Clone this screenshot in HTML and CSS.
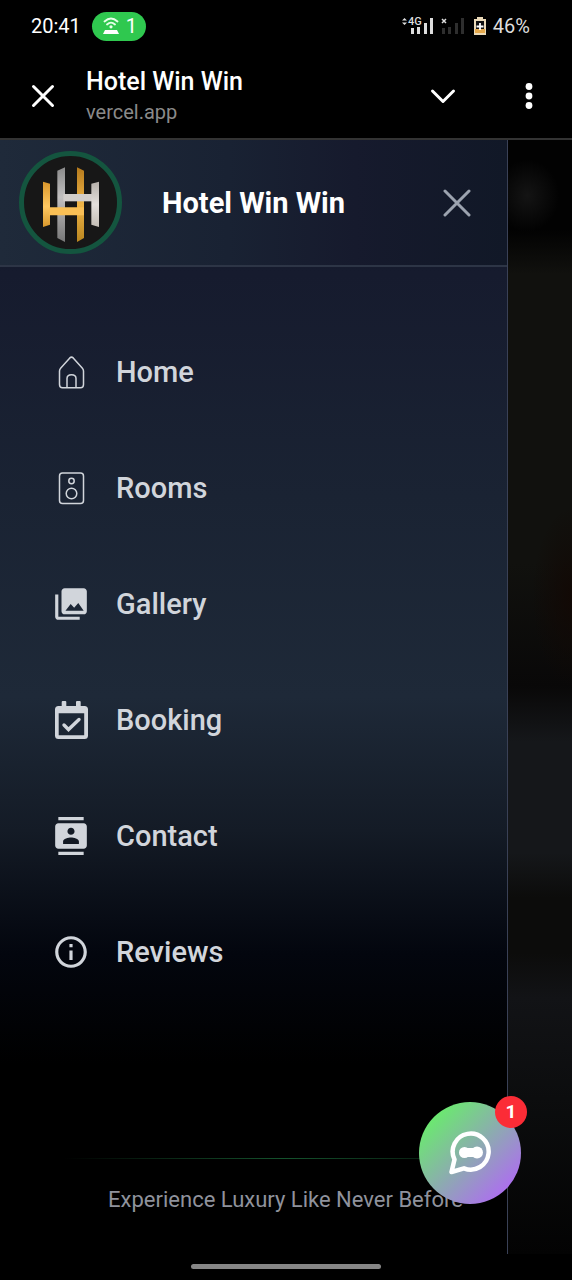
FILE: index.html
```html
<!DOCTYPE html>
<html lang="en">
<head>
  <meta charset="UTF-8">
  <meta name="viewport" content="width=device-width, initial-scale=1.0">
  <title>Hotel Win Win</title>
  <link rel="stylesheet" href="styles.css">
</head>
<body>
  <!-- Status bar -->
  <div class="status-bar">
    <span class="time">20:41</span>
    <span class="hotspot">
      <svg width="18" height="18" viewBox="0 0 18 18" fill="none" stroke="#e6ffe9" stroke-width="1.8" stroke-linecap="round">
        <path d="M2.500 4.500Q9-1.500 15.500 4.500M5 7.500Q9 3.700 13 7.500"/>
        <circle cx="9" cy="9.800" r="1.600" fill="#e6ffe9" stroke="none"/>
        <path d="M3 13h12l2 4H1z" fill="#fff" stroke="none"/>
      </svg>
      <span>1</span>
    </span>
    <div class="status-right">
      <svg class="signal" width="64" height="20" viewBox="0 0 64 20">
        <path d="M1 4.500 3.500 2 6 4.500zM1 6.500 3.500 9 6 6.500z" fill="#ddd"/>
        <text x="7" y="9" class="network">4G</text>
        <path d="M10 12h3v6h-3zM16 11h3v7h-3zM23 7h3v11h-3zM29 2h3v16h-3z" fill="#ddd"/>
        <path d="M41 12h3v6h-3zM47 11h3v7h-3zM54 7h3v11h-3zM60 2h3v16h-3z" fill="#2e2e2e"/>
        <path d="M41 3l4 4M45 3l-4 4" stroke="#ddd" stroke-width="1.500"/>
      </svg>
      <svg width="14" height="18" viewBox="0 0 14 18">
        <path d="M4 0h6v2h3v16H1V2h3z" fill="#ead9b8"/>
        <path d="M3 4h8v8H3z" fill="#111"/>
        <path d="M2 12h10v4H2z" fill="#e5a94c"/>
        <path d="M7 6v7M3.500 9.500h7" stroke="#fff" stroke-width="1.800"/>
      </svg>
      <span>46%</span>
    </div>
  </div>

  <!-- In-app browser bar -->
  <header class="app-bar">
    <button class="icon-button" aria-label="Close">
      <svg width="24" height="24" viewBox="0 0 24 24"><path d="M2.500 2.500 21.500 21.500M21.500 2.500 2.500 21.500" stroke="#fff" stroke-width="3" stroke-linecap="round"/></svg>
    </button>
    <div class="app-title">
      <div class="title">Hotel Win Win</div>
      <div class="domain">vercel.app</div>
    </div>
    <button class="icon-button minimize" aria-label="Minimize">
      <svg width="26" height="16" viewBox="0 0 26 16"><path d="M2.500 3 13 13.500 23.500 3" fill="none" stroke="#fff" stroke-width="3" stroke-linecap="round" stroke-linejoin="round"/></svg>
    </button>
    <button class="icon-button" aria-label="More options">
      <svg width="8" height="26" viewBox="0 0 8 26" fill="#fff"><circle cx="4" cy="3.500" r="3.400"/><circle cx="4" cy="13" r="3.400"/><circle cx="4" cy="22.500" r="3.400"/></svg>
    </button>
  </header>

  <div class="page">
    <!-- Drawer -->
    <aside class="drawer">
      <div class="drawer-header">
        <svg class="logo" viewBox="57 44 309 309">
          <defs>
            <linearGradient id="gold" x1="0" x2="0" y1="0" y2="1">
              <stop offset="0" stop-color="#d9962b"/>
              <stop offset=".55" stop-color="#ffc861"/>
              <stop offset="1" stop-color="#d8982c"/>
            </linearGradient>
            <linearGradient id="gold-dark" x1="0" x2="0" y1="0" y2="1">
              <stop offset="0" stop-color="#b57a1c"/>
              <stop offset=".5" stop-color="#f0b548"/>
              <stop offset="1" stop-color="#b9861f"/>
            </linearGradient>
            <linearGradient id="silver" x1="0" x2="0" y1="0" y2="1">
              <stop offset="0" stop-color="#8a8a8a"/>
              <stop offset=".4" stop-color="#c2c0c0"/>
              <stop offset="1" stop-color="#777"/>
            </linearGradient>
            <linearGradient id="silver-light" x1="0" x2="0" y1="0" y2="1">
              <stop offset="0" stop-color="#b5b0aa"/>
              <stop offset=".5" stop-color="#e4e0dc"/>
              <stop offset="1" stop-color="#c4beb5"/>
            </linearGradient>
          </defs>
          <circle cx="211.500" cy="198.500" r="147" fill="#171717" stroke="#14553f" stroke-width="15"/>
          <path d="M231 93 252 103V305L231 317z" fill="url(#gold-dark)"/>
          <path d="M172 103 195 93V317L172 305z" fill="url(#silver)"/>
          <path d="M190 173H276V195H190z" fill="#d2cecb"/>
          <path d="M274 142 297 136V272L274 265z" fill="url(#silver-light)"/>
          <path d="M129 136 150 142V265L129 272z" fill="url(#gold)"/>
          <path d="M148 213H252V237H148z" fill="#f9bf55"/>
        </svg>
        <h1 class="hotel-name">Hotel Win Win</h1>
        <button class="icon-button drawer-close" aria-label="Close menu">
          <svg width="28" height="28" viewBox="0 0 28 28"><path d="M2 2 26 26M26 2 2 26" stroke="#9ca3af" stroke-width="3" stroke-linecap="round"/></svg>
        </button>
      </div>

      <nav class="menu">
        <a class="menu-item" href="#home">
          <svg class="menu-icon" viewBox="0 0 38 38" fill="none" stroke="currentColor" stroke-width="1.500">
            <path d="M17.800 4.900Q19.500 3.300 21.200 4.900L30.200 15Q31.500 16.400 31.500 18V31.500Q31.500 34.800 28.500 34.800H10.500Q7.500 34.800 7.500 31.500V18Q7.500 16.400 8.800 15z"/>
            <path d="M15 34.800V25.500Q15 21.700 19.500 21.700T24 25.500V34.800"/>
          </svg>
          <span>Home</span>
        </a>
        <a class="menu-item" href="#rooms">
          <svg class="menu-icon" viewBox="0 0 38 38" fill="none" stroke="currentColor" stroke-width="1.500">
            <rect x="7.500" y="4" width="24" height="30.500" rx="3"/>
            <circle cx="19.500" cy="12" r="2.700"/>
            <circle cx="19.500" cy="24.500" r="5.300"/>
          </svg>
          <span>Rooms</span>
        </a>
        <a class="menu-item" href="#gallery">
          <svg class="menu-icon" viewBox="0 0 24 24" fill="currentColor">
            <path fill-rule="evenodd" d="M22 16.500V4c0-1.100-.9-2-2-2H8c-1.100 0-2 .9-2 2v12.500c0 1.100.9 2 2 2h12c1.100 0 2-.9 2-2zM8.500 16.300 11.800 12 14 14.400 16.600 11.300 20 16.300zM2 6v14c0 1.100.9 2 2 2h13.500v-2H4V6z"/>
          </svg>
          <span>Gallery</span>
        </a>
        <a class="menu-item" href="#booking">
          <svg class="menu-icon" viewBox="0 0 38 38" fill="currentColor">
            <path fill-rule="evenodd" d="M9.700 1Q9.700 0 10.700 0H13.300Q14.300 0 14.300 1V5H24V1Q24 0 25 0H27.700Q28.700 0 28.700 1V5H32.500Q36 5 36 8.500V34.500Q36 38 32.500 38H6.500Q3 38 3 34.500V8.500Q3 5 6.500 5H9.700zM6.700 12.300V34.300H32.200V12.300z"/>
            <path d="M12 24 16.500 28.500 27 18.500" fill="none" stroke="currentColor" stroke-width="3.400" stroke-linecap="round"/>
          </svg>
          <span>Booking</span>
        </a>
        <a class="menu-item" href="#contact">
          <svg class="menu-icon" viewBox="0 0 24 24" fill="currentColor">
            <path d="M20 0H4v2h16V0zM4 24h16v-2H4v2zM20 4H4c-1.100 0-2 .9-2 2v12c0 1.100.9 2 2 2h16c1.100 0 2-.9 2-2V6c0-1.100-.9-2-2-2zm-8 2.750c1.240 0 2.250 1.010 2.250 2.250s-1.010 2.250-2.250 2.250S9.750 10.240 9.750 9 10.760 6.750 12 6.750zM17 17H7v-1.500c0-1.670 3.330-2.500 5-2.500s5 .83 5 2.500V17z"/>
          </svg>
          <span>Contact</span>
        </a>
        <a class="menu-item" href="#reviews">
          <svg class="menu-icon" viewBox="0 0 24 24" fill="currentColor">
            <path d="M11 7h2v2h-2zm0 4h2v6h-2zm1-9C6.480 2 2 6.480 2 12s4.480 10 10 10 10-4.480 10-10S17.520 2 12 2zm0 18c-4.410 0-8-3.590-8-8s3.590-8 8-8 8 3.590 8 8-3.590 8-8 8z"/>
          </svg>
          <span>Reviews</span>
        </a>
      </nav>

      <div class="drawer-footer">
        <div class="divider"></div>
        <p class="tagline">Experience Luxury Like Never Before</p>
      </div>
    </aside>
    <div class="backdrop"></div>

    <!-- Chat button -->
    <button class="chat" aria-label="Open chat, 1 new message">
      <svg width="46" height="46" viewBox="0 0 46 46">
        <path d="M4.500 42 7.500 29.500A18 18 0 1 1 17 38.300Z" fill="none" stroke="#fff" stroke-width="4.500" stroke-linejoin="round"/>
        <path d="M17 22.500H31" stroke="#fff" stroke-width="9"/>
        <circle cx="17.500" cy="22.500" r="5.500" fill="#fff"/>
        <circle cx="30" cy="22.500" r="6" fill="#fff"/>
      </svg>
      <span class="badge">1</span>
    </button>
  </div>

  <div class="gesture-bar"><div class="handle"></div></div>
</body>
</html>
```
FILE: styles.css
```css
* {
  box-sizing: border-box;
}
body {
  font-family: Roboto, "Liberation Sans", sans-serif;
  margin: 0;
  min-height: 100vh;
  display: flex;
  flex-direction: column;
  background-color: #000;
  color: #fff;
}
.icon-button {
  display: flex;
  padding: 0;
  border: none;
  background: none;
  cursor: pointer;
}
/* Status bar */
.status-bar {
  display: flex;
  align-items: center;
  height: 52px;
  padding: 0 42px 0 31px;
  font-size: 20px;
}
.hotspot {
  display: flex;
  align-items: center;
  gap: 6px;
  height: 29px;
  margin-left: 11px;
  padding: 0 9px 0 10px;
  border-radius: 15px;
  background-color: #2fc84f;
}
.status-right {
  display: flex;
  align-items: center;
  gap: 6px;
  margin-left: auto;
  color: #ddd;
}
.signal {
  margin-right: 2px;
}
.network {
  font-size: 11px;
  font-weight: 500;
  fill: #ddd;
}
/* Browser bar */
.app-bar {
  display: flex;
  align-items: center;
  height: 88px;
  padding: 2px 39px 0 31px;
  border-bottom: 2px solid #333;
}
.app-title {
  flex: 1;
  margin-left: 31px;
}
.title {
  font-size: 25px;
  font-weight: 500;
  line-height: 32px;
}
.domain {
  font-size: 20px;
  line-height: 28px;
  color: #8a8a8a;
}
.minimize {
  margin-right: 69px;
}
/* Page */
.page {
  position: relative;
  display: flex;
  flex: 1;
}
.drawer {
  display: flex;
  flex-direction: column;
  flex: 1;
  border-right: 1px solid #3a4156;
  background: linear-gradient(#111827, #161b2e 12%, #1a2333 32%, #1e2938 50%, #141b26 62%, #03060e 73%, #000 83%);
}
.drawer-header {
  display: flex;
  align-items: center;
  height: 127px;
  padding: 0 36px 0 19px;
  border-bottom: 2px solid #2d3546;
  background: linear-gradient(to right, #1f2a3a, #192233 45%, #161a2d 70%, #111827);
}
.logo {
  width: 103px;
  height: 103px;
}
.hotel-name {
  margin: 0 0 0 40px;
  font-size: 29px;
  font-weight: 700;
}
.drawer-close {
  margin-left: auto;
}
.menu {
  padding-top: 47px;
}
.menu-item {
  display: flex;
  align-items: center;
  gap: 26px;
  height: 116px;
  padding-left: 52px;
  color: #d1d5db;
  font-size: 29px;
  font-weight: 500;
  text-decoration: none;
}
.menu-icon {
  width: 38px;
  height: 38px;
}
.drawer-footer {
  margin-top: auto;
  padding: 0 0 38px 64px;
}
.divider {
  height: 1px;
  background: linear-gradient(to right, transparent, #14532d, transparent);
}
.tagline {
  margin: 25px 0 0;
  color: #8f929c;
  font-size: 22px;
  line-height: 32px;
  text-align: center;
}
/* Dimmed page behind the drawer */
.backdrop {
  width: 64px;
  background:
    radial-gradient(ellipse 32px 36px at 30% 5%, #141414, transparent),
    radial-gradient(ellipse 40px 90px at 100% 41%, #120905, transparent),
    linear-gradient(#020202 8%, #11110e 12%, #11110e 38%, #090808 49%, #15171a 54%, #15171a 64%, #0c0c0b 68%, #0c0c0b 73%, #121316 77%, #0c0d0e 86%, #030303);
}
/* Chat */
.chat {
  position: absolute;
  right: 51px;
  bottom: 50px;
  display: flex;
  align-items: center;
  justify-content: center;
  width: 102px;
  height: 102px;
  padding: 0;
  border: none;
  border-radius: 50%;
  background: linear-gradient(135deg, #67f068 10%, #b069f5 90%);
  cursor: pointer;
}
.badge {
  position: absolute;
  top: -6px;
  right: -6px;
  width: 32px;
  height: 32px;
  border-radius: 50%;
  background-color: #fb2c36;
  color: #fff;
  font-family: Roboto, sans-serif;
  font-size: 19px;
  font-weight: 700;
  line-height: 32px;
}
/* Gesture bar */
.gesture-bar {
  display: flex;
  justify-content: center;
  height: 26px;
  padding-top: 10px;
}
.handle {
  width: 190px;
  height: 5px;
  border-radius: 3px;
  background-color: #868686;
}
```
